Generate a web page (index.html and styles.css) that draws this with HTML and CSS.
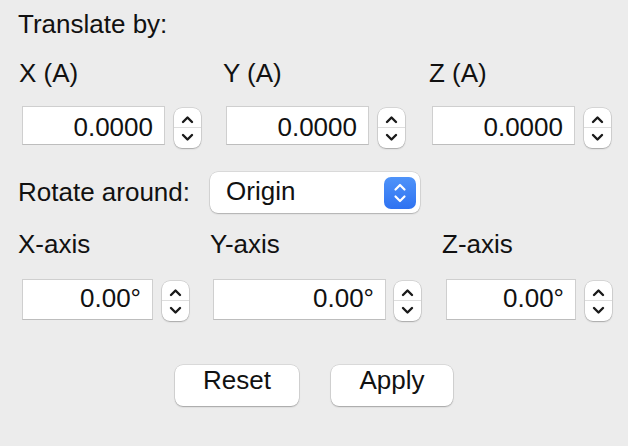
FILE: index.html
```html
<!DOCTYPE html>
<html>
<head>
<meta charset="utf-8">
<link rel="stylesheet" href="styles.css">
</head>
<body>
<div class="panel">
  <div class="title">Translate by:</div>
  <div class="trans-grid">
    <div class="cell">
      <div class="lbl">X (A)</div>
      <div class="spin"><div class="field">0.0000</div><div class="stepper"><svg viewBox="0 0 27 40" width="27" height="40"><polyline points="9,14 13.5,9.5 18,14"/><polyline points="9,27 13.5,31.5 18,27"/></svg></div></div>
    </div>
    <div class="cell">
      <div class="lbl">Y (A)</div>
      <div class="spin"><div class="field">0.0000</div><div class="stepper"><svg viewBox="0 0 27 40" width="27" height="40"><polyline points="9,14 13.5,9.5 18,14"/><polyline points="9,27 13.5,31.5 18,27"/></svg></div></div>
    </div>
    <div class="cell">
      <div class="lbl">Z (A)</div>
      <div class="spin"><div class="field">0.0000</div><div class="stepper"><svg viewBox="0 0 27 40" width="27" height="40"><polyline points="9,14 13.5,9.5 18,14"/><polyline points="9,27 13.5,31.5 18,27"/></svg></div></div>
    </div>
  </div>
  <div class="rotate-row">
    <span class="lbl">Rotate around:</span>
    <div class="popup">
      <span class="popup-text">Origin</span>
      <span class="popbtn"><svg viewBox="0 0 32 32" width="32" height="32"><polyline points="11.5,12.5 16,8 20.5,12.5"/><polyline points="11.5,19.5 16,24 20.5,19.5"/></svg></span>
    </div>
  </div>
  <div class="rot-grid">
    <div class="cell">
      <div class="lbl">X-axis</div>
      <div class="spin s1"><div class="field fs">0.00°</div><div class="stepper"><svg viewBox="0 0 27 40" width="27" height="40"><polyline points="9,14 13.5,9.5 18,14"/><polyline points="9,27 13.5,31.5 18,27"/></svg></div></div>
    </div>
    <div class="cell">
      <div class="lbl">Y-axis</div>
      <div class="spin s2"><div class="field fl">0.00°</div><div class="stepper"><svg viewBox="0 0 27 40" width="27" height="40"><polyline points="9,14 13.5,9.5 18,14"/><polyline points="9,27 13.5,31.5 18,27"/></svg></div></div>
    </div>
    <div class="cell">
      <div class="lbl">Z-axis</div>
      <div class="spin s1"><div class="field fs">0.00°</div><div class="stepper"><svg viewBox="0 0 27 40" width="27" height="40"><polyline points="9,14 13.5,9.5 18,14"/><polyline points="9,27 13.5,31.5 18,27"/></svg></div></div>
    </div>
  </div>
  <div class="buttons">
    <div class="btn reset">Reset</div>
    <div class="btn apply">Apply</div>
  </div>
</div>
</body>
</html>
```

FILE: styles.css
```css
html, body {
  margin: 0;
  padding: 0;
  background: #ececec;
}
body {
  font-family: "Liberation Sans", Arial, Helvetica, sans-serif;
  font-size: 26px;
  color: #111;
  width: 628px;
  height: 446px;
  overflow: hidden;
}
.panel {
  padding: 10px 0 0 18px;
}
.title {
  line-height: 29px;
}
.lbl {
  line-height: 29px;
  white-space: nowrap;
}
.trans-grid {
  display: grid;
  grid-template-columns: 204px 206px 190px;
  margin-top: 20px;
  margin-left: 1px;
}
.trans-grid .spin {
  margin-top: 18px;
  margin-left: 3px;
}
.spin {
  display: flex;
  align-items: flex-start;
  gap: 9px;
}
.field {
  box-sizing: border-box;
  width: 143px;
  height: 39px;
  background: #fff;
  border: 1px solid #cfcfcf;
  border-bottom-color: #bdbdbd;
  text-align: right;
  padding: 6px 11px 0 0;
  line-height: 28px;
}
.stepper {
  box-sizing: border-box;
  width: 27px;
  height: 40px;
  margin-top: 2px;
  background: #fff;
  border-radius: 8px;
  box-shadow: 0 0 0 0.5px rgba(0,0,0,0.18), 0 1px 1.5px rgba(0,0,0,0.22);
  background-image: linear-gradient(#fff 0, #fff 19.5px, #dedede 19.5px, #dedede 20.5px, #fff 20.5px);
}
.stepper svg, .popbtn svg {
  display: block;
}
.stepper polyline {
  fill: none;
  stroke: #1a1a1a;
  stroke-width: 2.4;
  stroke-linecap: round;
  stroke-linejoin: round;
}
.rotate-row {
  display: flex;
  align-items: center;
  gap: 20px;
  margin-top: 24px;
}
.popup {
  box-sizing: border-box;
  width: 210px;
  height: 41px;
  background: #fff;
  border-radius: 8px;
  box-shadow: 0 0 0 0.5px rgba(0,0,0,0.15), 0 1px 1.5px rgba(0,0,0,0.2);
  display: flex;
  align-items: center;
  justify-content: space-between;
  padding: 0 4px 0 16px;
}
.popup-text {
  line-height: 29px;
  padding-bottom: 2px;
}
.popbtn {
  width: 32px;
  height: 32px;
  border-radius: 7px;
  background: linear-gradient(#4e93f9, #2f72f1);
}
.popbtn polyline {
  fill: none;
  stroke: #fff;
  stroke-width: 2.2;
  stroke-linecap: round;
  stroke-linejoin: round;
}
.rot-grid {
  display: grid;
  grid-template-columns: 192px 232px 170px;
  margin-top: 17px;
}
.rot-grid .spin {
  margin-top: 20px;
}
.rot-grid .s1 { margin-left: 4px; gap: 9px; }
.rot-grid .s2 { margin-left: 3px; gap: 8px; }
.field.fs { width: 131px; height: 41px; padding-top: 4px; }
.field.fl { width: 173px; height: 41px; padding-top: 4px; }
.buttons {
  display: flex;
  justify-content: center;
  gap: 32px;
  margin-top: 44px;
  margin-left: -18px;
}
.btn {
  box-sizing: border-box;
  height: 41px;
  background: #fff;
  border-radius: 8px;
  box-shadow: 0 0 0 0.5px rgba(0,0,0,0.15), 0 1px 1.5px rgba(0,0,0,0.25);
  text-align: center;
  line-height: 29px;
  padding-top: 1px;
}
.reset { width: 124px; }
.apply { width: 122px; }
```
